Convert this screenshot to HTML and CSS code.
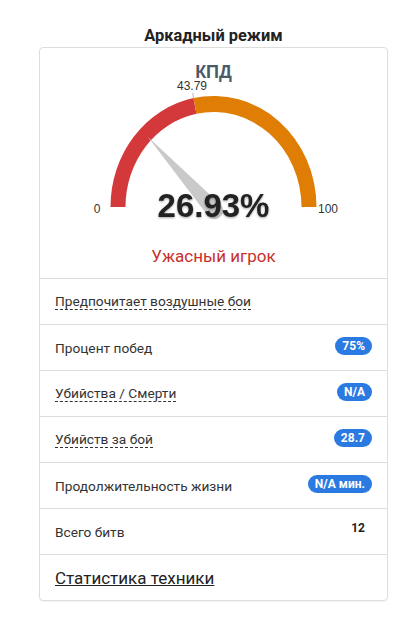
FILE: index.html
```html
<!doctype html>
<html>
<head>
    <meta charset="utf-8" />
    <meta name="viewport" content="width=device-width, initial-scale=1" />
    <title>Аркадный режим</title>
    <link rel="stylesheet" href="styles.css">
</head>
<body>
    <div class="Page">
        <h3 class="ModeTitle">Аркадный режим</h3>
        <div class="Panel">
            <div class="Gauge">
                <svg class="Gauge_svg" width="347" height="184" viewBox="0 0 347 184">
                    <defs>
                        <filter id="value_shadow" x="-10%" y="-20%" width="120%" height="150%">
                            <feDropShadow dx="0" dy="1" stdDeviation="1.2" flood-color="#000" flood-opacity="0.35" />
                        </filter>
                    </defs>
                    <text class="Gauge_title" x="173.5" y="30" text-anchor="middle">КПД</text>
                    <path d="M70.5 159 A103 111 0 0 1 153.5 50.1 L156.4 65.8 A88 95 0 0 0 85.5 159 Z" fill="#d3383a" />
                    <path d="M153.5 50.1 A103 111 0 0 1 276.5 159 L261.5 159 A88 95 0 0 0 156.4 65.8 Z" fill="#e07d05" />
                    <line x1="153.5" y1="50.1" x2="152.8" y2="45" stroke="#bbb" stroke-width="1" />
                    <text class="Gauge_label" x="152" y="42" text-anchor="middle">43.79</text>
                    <text class="Gauge_label" x="57" y="165" text-anchor="middle">0</text>
                    <text class="Gauge_label" x="278" y="165">100</text>
                    <path d="M108 89 L179.3 155.5 A8.5 8.5 0 1 1 167.7 167.5 Z" fill="#c9c9c9" />
                    <text class="Gauge_value" x="173.5" y="169" text-anchor="middle" filter="url(#value_shadow)">26.93%</text>
                </svg>
                <div class="Gauge_verdict">Ужасный игрок</div>
            </div>
            <ul class="Stats">
                <li class="Stats_row">
                    <abbr class="Hint" title="Большинство боёв проведено на самолётах">Предпочитает воздушные бои</abbr>
                </li>
                <li class="Stats_row">
                    <span>Процент побед</span>
                    <span class="Badge">75%</span>
                </li>
                <li class="Stats_row">
                    <abbr class="Hint" title="Отношение убийств к смертям">Убийства / Смерти</abbr>
                    <span class="Badge">N/A</span>
                </li>
                <li class="Stats_row">
                    <abbr class="Hint" title="Среднее число убийств за бой">Убийств за бой</abbr>
                    <span class="Badge">28.7</span>
                </li>
                <li class="Stats_row">
                    <span>Продолжительность жизни</span>
                    <span class="Badge">N/A мин.</span>
                </li>
                <li class="Stats_row">
                    <span>Всего битв</span>
                    <span class="Badge _Plain">12</span>
                </li>
                <li class="Stats_row">
                    <a class="Stats_link" href="#vehicles">Статистика техники</a>
                </li>
            </ul>
        </div>
    </div>
</body>
</html>
```

FILE: styles.css
```css
body {
    margin: 0;
    background: #fff;
    color: #333;
    font-family: Roboto, 'Liberation Sans', Arial, sans-serif;
    font-size: 13.7px;
}
.Page {
    padding: 25px 20px 18px 39px;
}
.ModeTitle {
    margin: 0;
    font-size: 16.4px;
    line-height: 22px;
    font-weight: 700;
    color: #222;
    text-align: center;
}
.Panel {
    border: 1px solid #ddd;
    border-radius: 4px;
    box-shadow: 0 1px 1px rgba(0, 0, 0, .05);
}
.Gauge {
    padding-bottom: 11px;
    text-align: center;
}
.Gauge_svg {
    display: block;
}
.Gauge_title {
    font-family: 'Liberation Sans', Arial, sans-serif;
    font-size: 18px;
    font-weight: 700;
    fill: #4a5b68;
}
.Gauge_label {
    font-family: 'Liberation Sans', Arial, sans-serif;
    font-size: 12px;
    fill: #333;
}
.Gauge_value {
    font-family: 'Liberation Sans', Arial, sans-serif;
    font-size: 33px;
    font-weight: 700;
    fill: #222;
}
.Gauge_verdict {
    margin-top: 13px;
    font-size: 17px;
    line-height: 22px;
    color: #c9302c;
}
.Stats {
    list-style: none;
    margin: 0;
    padding: 0;
}
.Stats_row {
    display: flex;
    justify-content: space-between;
    align-items: center;
    height: 45px;
    padding: 0 15px 0 15px;
    border-top: 1px solid #ddd;
}
.Hint {
    text-decoration: none;
    border-bottom: 1px dashed #333;
    cursor: help;
}
.Badge {
    padding: 3px 7px;
    border-radius: 10px;
    background: #2a7ae2;
    color: #fff;
    font-size: 12px;
    font-weight: 700;
    line-height: 1;
    margin-top: -3px;
}
.Badge._Plain {
    background: none;
    color: #222;
    margin-top: -7px;
}
.Stats_link {
    font-size: 17px;
    color: #222;
    text-decoration: underline;
}
```
